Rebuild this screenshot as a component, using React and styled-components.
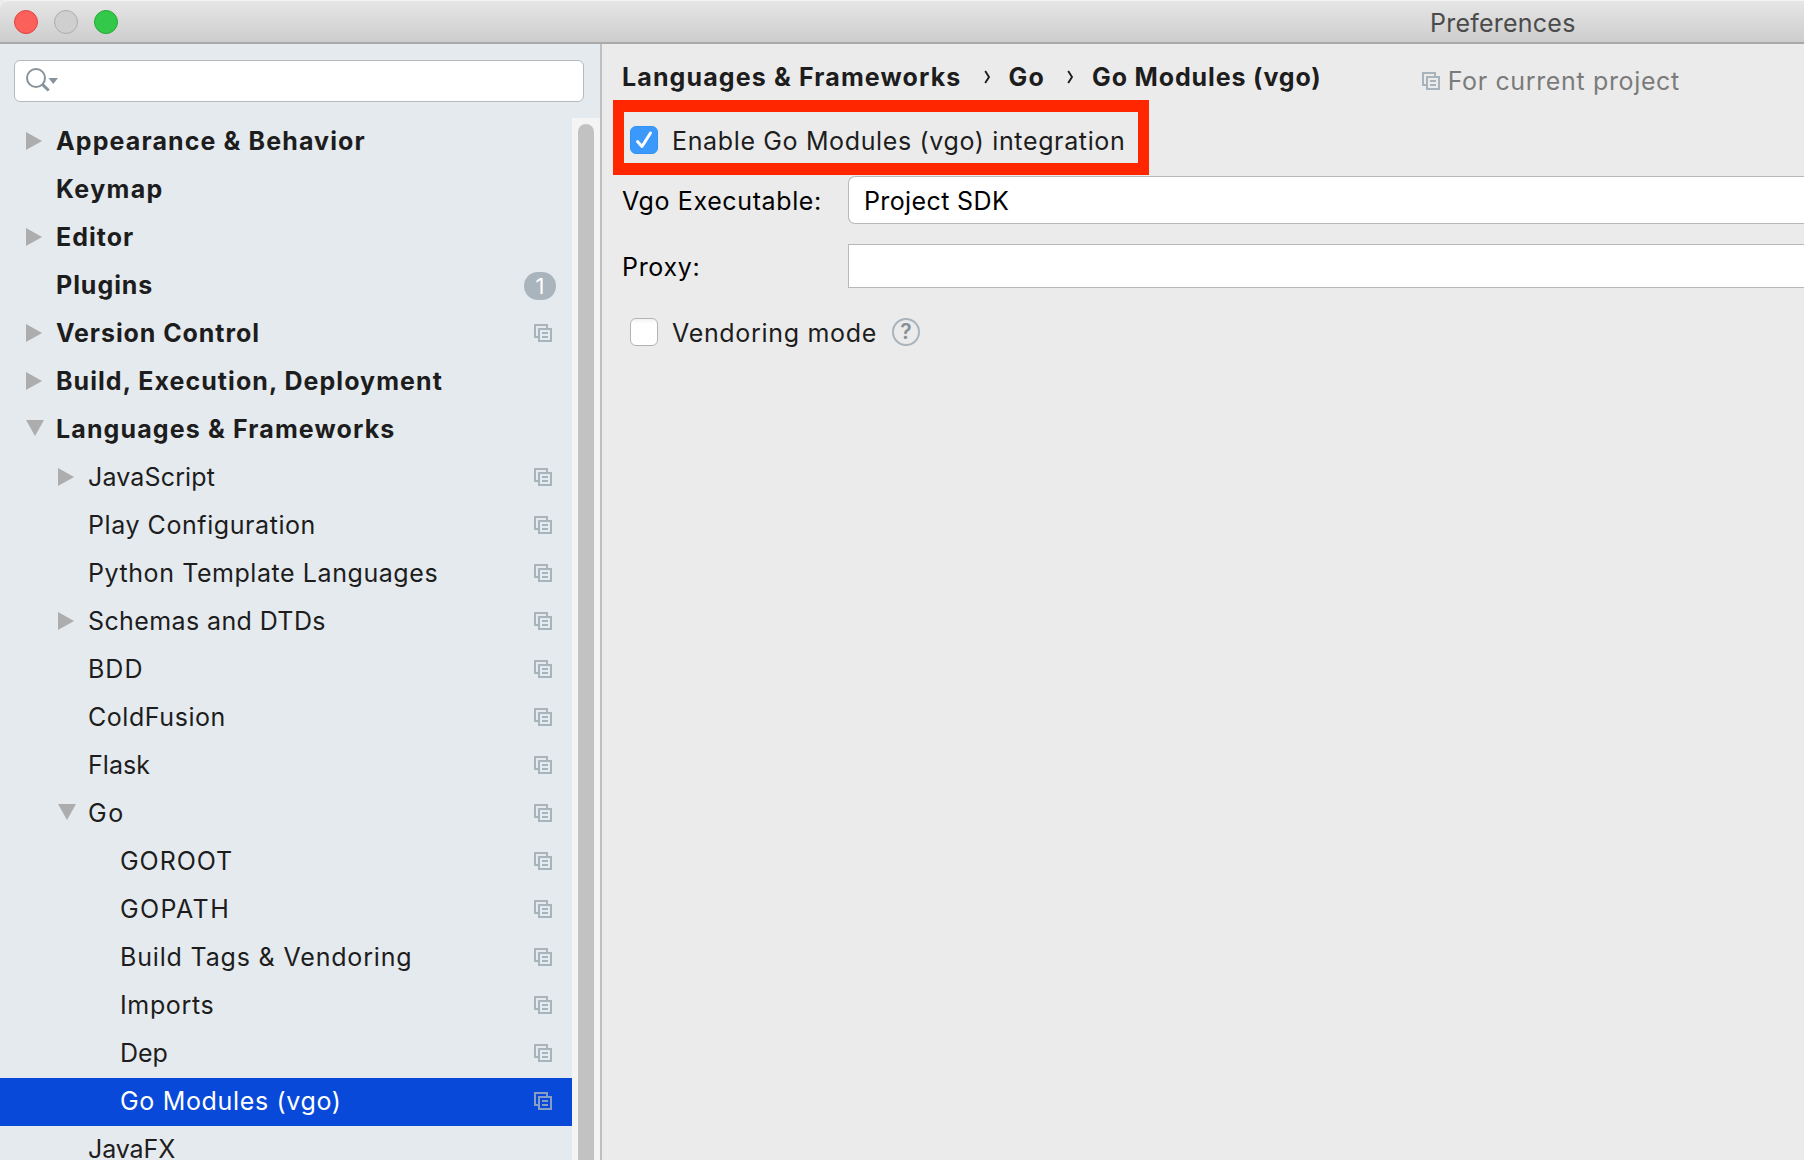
import React from 'react';
import styled, { createGlobalStyle } from 'styled-components';

const GlobalStyle = createGlobalStyle`
  *, *::before, *::after { box-sizing: border-box; }
  html, body { margin: 0; height: 100%; overflow: hidden; }
  body {
    font-family: Inter, "Liberation Sans", sans-serif;
    font-size: 25px;
    color: #1d1d1d;
    background: #ebebeb;
  }
`;

const Window = styled.div`
  display: flex;
  flex-direction: column;
  width: 100vw;
  height: 100vh;
  overflow: hidden;
  background: #ebebeb;
`;

const TitleBar = styled.header`
  display: flex;
  align-items: center;
  flex: none;
  height: 44px;
  padding-left: 14px;
  background: linear-gradient(#e6e6e6, #cdcdcd);
  border-top: 1px solid #f4f4f4;
  border-bottom: 2px solid #a9a9a9;
  border-top-left-radius: 8px;
`;

const Lights = styled.div`
  display: flex;
  gap: 16px;
`;

const Light = styled.span`
  width: 24px;
  height: 24px;
  border-radius: 50%;
  background: ${(p) => p.$fill};
  border: 1px solid ${(p) => p.$edge};
`;

const Label = styled.span`
  white-space: nowrap;
  line-height: 32px;
  font-weight: ${(p) => (p.$bold ? 700 : 400)};
  letter-spacing: ${(p) => p.$track ?? 0.68}px;
`;

const Title = styled(Label)`
  margin: 2px 0 0 1312px;
  color: #4b4b4b;
`;

const Body = styled.div`
  display: flex;
  flex: 1;
  min-height: 0;
`;

const Sidebar = styled.aside`
  display: flex;
  flex-direction: column;
  flex: none;
  width: 602px;
  background: #e5eaee;
  border-right: 2px solid #bfbfbf;
`;

const Search = styled.div`
  display: flex;
  align-items: center;
  flex: none;
  height: 42px;
  margin: 16px 16px 16px 14px;
  padding-left: 11px;
  background: #fff;
  border: 1px solid #b4babe;
  border-radius: 6px;
`;

const TreeArea = styled.div`
  display: flex;
  flex: 1;
  min-height: 0;
`;

const Tree = styled.div`
  flex: 1;
  overflow: hidden;
`;

const TreeRow = styled.div`
  display: flex;
  align-items: center;
  height: 48px;
  padding-left: ${(p) => 24 + p.$level * 32}px;
  padding-right: ${(p) => (p.$badge ? 16 : 20)}px;
  padding-bottom: 2px;
  color: ${(p) => (p.$selected ? '#fff' : '#1d1d1d')};
  background: ${(p) => (p.$selected ? '#0849d9' : 'transparent')};
`;

const ArrowSlot = styled.span`
  display: flex;
  flex: none;
  width: 32px;
  height: 20px;
  padding-left: 2px;
`;

const RowLabel = styled(Label)`
  flex: 1;
`;

const Badge = styled.span`
  display: flex;
  align-items: center;
  justify-content: center;
  width: 32px;
  height: 28px;
  margin-top: 2px;
  border-radius: 14px;
  background: #a9b4bd;
  color: #fff;
  font-size: 22px;
  line-height: 28px;
`;

const ScrollTrack = styled.div`
  flex: none;
  width: 28px;
  padding: 6px 6px 0;
  background: #f4f4f4;
`;

const ScrollThumb = styled.div`
  height: 100%;
  background: #c2c2c2;
  border-radius: 8px 8px 0 0;
`;

const Main = styled.main`
  flex: 1;
  min-width: 0;
  overflow: hidden;
`;

const Header = styled.div`
  display: flex;
  align-items: center;
  height: 56px;
  padding: 10px 0 0 20px;
`;

const Crumbs = styled.nav`
  display: flex;
  align-items: center;
`;

const CrumbArrow = styled.svg`
  flex: none;
  margin: 0 ${(p) => p.$after}px 0 ${(p) => p.$before}px;
`;

const Scope = styled.div`
  display: flex;
  align-items: center;
  gap: 8px;
  margin: 8px 0 0 100px;
  color: #7b7b7b;
`;

const Highlight = styled.div`
  display: flex;
  align-items: center;
  width: 536px;
  height: 75px;
  margin-left: 11px;
  padding: 5px 0 0 6px;
  border: solid #ff2600;
  border-width: 12px 11px;
`;

const Option = styled.label`
  display: flex;
  align-items: center;
  gap: 14px;
`;

const Box = styled.span`
  display: flex;
  align-items: center;
  justify-content: center;
  flex: none;
  width: 28px;
  height: 28px;
  border-radius: 6px;
  background: ${(p) => (p.$checked ? '#3b99fc' : 'linear-gradient(#f3f3f3, #fff 5px)')};
  border: 1px solid ${(p) => (p.$checked ? '#3390f5' : '#b3b3b3')};
`;

const OptionText = styled(Label)`
  margin-top: 2px;
`;

const Form = styled.div`
  display: grid;
  grid-template-columns: 226px 1fr;
  row-gap: 20px;
  align-items: center;
  margin: 1px 0 30px 20px;
  color: #000;
`;

const FormLabel = styled(Label)`
  margin-top: ${(p) => p.$drop ?? 1}px;
`;

const Select = styled.div`
  display: flex;
  align-items: center;
  height: 48px;
  padding: 1px 0 0 15px;
  background: #fff;
  border: 1px solid #b8b8b8;
  border-right: 0;
  border-radius: 7px 0 0 7px;
`;

const Field = styled.div`
  height: 44px;
  background: #fff;
  border: 1px solid #b8b8b8;
  border-right: 0;
`;

const Vendoring = styled.div`
  display: flex;
  align-items: center;
  height: 28px;
  padding-left: 28px;
`;

const Help = styled.span`
  display: flex;
  align-items: center;
  justify-content: center;
  width: 28px;
  height: 28px;
  margin-left: 15px;
  border: 2px solid #a9b4bd;
  border-radius: 50%;
  color: #84909a;
  font-size: 21px;
  font-weight: 600;
  line-height: 24px;
`;

function Arrow({ open }) {
  return (
    <svg width="18" height="20" viewBox="0 0 18 20">
      <path d={open ? 'M0 1h18L9 17z' : 'M0 1l16 9L0 19z'} fill="#adadad" />
    </svg>
  );
}

function ProjectIcon({ color = '#a8b4bc' }) {
  return (
    <svg width="18" height="18" viewBox="0 0 18 18" fill="none" stroke={color} strokeWidth="2" shapeRendering="crispEdges">
      <path d="M4 13H1V1h12v3" />
      <path d="M5 5h12v12H5zM8 9h6M8 13h6" />
    </svg>
  );
}

function SearchIcon() {
  return (
    <svg width="34" height="26" viewBox="0 0 34 26" fill="none">
      <circle cx="10" cy="10" r="9" stroke="#87939c" strokeWidth="2" />
      <path d="M16.3 16.3l6.4 6.2" stroke="#87939c" strokeWidth="3" />
      <path d="M22.5 10h9.5l-4.75 6z" fill="#87939c" />
    </svg>
  );
}

function Chevron({ before, after }) {
  return (
    <CrumbArrow width="7" height="14" viewBox="0 0 7 14" fill="none" $before={before} $after={after}>
      <path d="M1.2 1L5 7L1.2 13" stroke="#1d1d1d" strokeWidth="1.9" />
    </CrumbArrow>
  );
}

const ROWS = [
  { text: 'Appearance & Behavior', level: 0, arrow: 'closed', track: 1.12 },
  { text: 'Keymap', level: 0, track: 1.35 },
  { text: 'Editor', level: 0, arrow: 'closed', track: 1.01 },
  { text: 'Plugins', level: 0, badge: 1, track: 0.95 },
  { text: 'Version Control', level: 0, arrow: 'closed', icon: true, track: 0.92 },
  { text: 'Build, Execution, Deployment', level: 0, arrow: 'closed', track: 1.05 },
  { text: 'Languages & Frameworks', level: 0, arrow: 'open', track: 1.13 },
  { text: 'JavaScript', level: 1, arrow: 'closed', icon: true, track: 0.15 },
  { text: 'Play Configuration', level: 1, icon: true, track: 0.57 },
  { text: 'Python Template Languages', level: 1, icon: true, track: 0.57 },
  { text: 'Schemas and DTDs', level: 1, arrow: 'closed', icon: true, track: 0.39 },
  { text: 'BDD', level: 1, icon: true, track: 1 },
  { text: 'ColdFusion', level: 1, icon: true, track: 0.56 },
  { text: 'Flask', level: 1, icon: true, track: 0.05 },
  { text: 'Go', level: 1, arrow: 'open', icon: true, track: 1.5 },
  { text: 'GOROOT', level: 2, icon: true, track: 0.95 },
  { text: 'GOPATH', level: 2, icon: true, track: 1.4 },
  { text: 'Build Tags & Vendoring', level: 2, icon: true, track: 0.83 },
  { text: 'Imports', level: 2, icon: true, track: 0.65 },
  { text: 'Dep', level: 2, icon: true, track: 0 },
  { text: 'Go Modules (vgo)', level: 2, icon: true, selected: true, track: 0.66 },
  { text: 'JavaFX', level: 1, track: -0.1 },
];

export default function App() {
  return (
    <>
      <GlobalStyle />
      <Window>
        <TitleBar>
          <Lights>
            <Light $fill="#fc605b" $edge="#e0443f" />
            <Light $fill="#cfcfcf" $edge="#acacac" />
            <Light $fill="#34c84a" $edge="#24a937" />
          </Lights>
          <Title $track={0.23}>Preferences</Title>
        </TitleBar>
        <Body>
          <Sidebar>
            <Search>
              <SearchIcon />
            </Search>
            <TreeArea>
              <Tree>
                {ROWS.map((row) => (
                  <TreeRow key={row.text} $level={row.level} $selected={row.selected} $badge={row.badge}>
                    <ArrowSlot>{row.arrow && <Arrow open={row.arrow === 'open'} />}</ArrowSlot>
                    <RowLabel $bold={row.level === 0} $track={row.track}>{row.text}</RowLabel>
                    {row.badge && <Badge>{row.badge}</Badge>}
                    {row.icon && <ProjectIcon color={row.selected ? '#879dc4' : undefined} />}
                  </TreeRow>
                ))}
              </Tree>
              <ScrollTrack>
                <ScrollThumb />
              </ScrollTrack>
            </TreeArea>
          </Sidebar>
          <Main>
            <Header>
              <Crumbs>
                <Label $bold $track={1.13}>Languages &amp; Frameworks</Label>
                <Chevron before={22} after={18} />
                <Label $bold $track={1.2}>Go</Label>
                <Chevron before={22} after={18} />
                <Label $bold $track={0.87}>Go Modules (vgo)</Label>
              </Crumbs>
              <Scope>
                <ProjectIcon />
                <Label $track={0.64}>For current project</Label>
              </Scope>
            </Header>
            <Highlight>
              <Option>
                <Box $checked>
                  <svg width="18" height="20" viewBox="0 0 18 20" fill="none">
                    <path d="M2.5 11.5l4.5 5L15.5 3" stroke="#fff" strokeWidth="3" strokeLinecap="round" strokeLinejoin="round" />
                  </svg>
                </Box>
                <OptionText $track={0.64}>Enable Go Modules (vgo) integration</OptionText>
              </Option>
            </Highlight>
            <Form>
              <FormLabel $track={0.62}>Vgo Executable:</FormLabel>
              <Select>
                <Label $track={0.38}>Project SDK</Label>
              </Select>
              <FormLabel $track={0.7} $drop={1}>Proxy:</FormLabel>
              <Field />
            </Form>
            <Vendoring>
              <Option>
                <Box />
                <OptionText $track={0.68}>Vendoring mode</OptionText>
              </Option>
              <Help>?</Help>
            </Vendoring>
          </Main>
        </Body>
      </Window>
    </>
  );
}
